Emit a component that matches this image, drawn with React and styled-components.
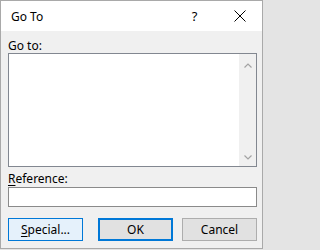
import styled, { createGlobalStyle } from "styled-components";

const GlobalStyle = createGlobalStyle`
  html, body {
    margin: 0;
    padding: 0;
    background: #e4e4e4;
  }
  body {
    font-family: "Noto Sans", "Segoe UI", sans-serif;
    font-size: 12px;
    color: #000;
  }
`;

const Window = styled.div`
  width: 261px;
  height: 247px;
  border: 1px solid #a9a9a9;
  background: #f0f0f0;
  display: flex;
  flex-direction: column;
`;

const TitleBar = styled.div`
  height: 30px;
  background: #fff;
  display: flex;
  align-items: center;
`;

const Title = styled.div`
  flex: 1;
  padding-left: 10px;
  font-size: 12px;
`;

const CaptionButton = styled.div`
  width: 45px;
  height: 30px;
  display: flex;
  align-items: center;
  justify-content: center;
  font-size: 13px;
`;

const Body = styled.div`
  flex: 1;
  padding: 7px 5px 0 7px;
  display: flex;
  flex-direction: column;
`;

const Label = styled.div`
  line-height: 15px;
  margin-top: ${({ $gap }) => $gap || 0}px;
  u {
    text-decoration: underline;
    text-underline-offset: 2px;
  }
`;

const ListBox = styled.div`
  height: 112px;
  margin-top: 0;
  border: 1px solid #828790;
  background: #fff;
  display: flex;
  justify-content: flex-end;
`;

const ScrollBar = styled.div`
  width: 17px;
  background: #f0f0f0;
  display: flex;
  flex-direction: column;
  justify-content: space-between;
  align-items: center;
  padding: 9px 0 6px;
`;

const TextInput = styled.div`
  height: 18px;
  margin-top: 1px;
  border: 1px solid #8a8a8a;
  background: #fff;
`;

const ButtonRow = styled.div`
  margin-top: 11px;
  display: flex;
  justify-content: space-between;
`;

const ButtonGroup = styled.div`
  display: flex;
  gap: 9px;
`;

const Button = styled.div`
  box-sizing: border-box;
  width: 75px;
  height: 23px;
  display: flex;
  align-items: center;
  justify-content: center;
  border: ${({ $variant }) => ($variant === "default" ? 2 : 1)}px solid
    ${({ $variant }) => ($variant ? "#0078d7" : "#adadad")};
  background: ${({ $variant }) => ($variant === "hover" ? "#e5f1fb" : "#e1e1e1")};
  u {
    text-decoration: underline;
    text-underline-offset: 2px;
  }
`;

const Chevron = ({ up }) => (
  <svg width="8" height="5" viewBox="0 0 8 5">
    <path
      d={up ? "M0.5 4.5 L4 1 L7.5 4.5" : "M0.5 0.5 L4 4 L7.5 0.5"}
      fill="none"
      stroke="#a3a3a3"
      strokeWidth="1.2"
    />
  </svg>
);

const CloseIcon = () => (
  <svg width="12" height="12" viewBox="0 0 12 12">
    <path d="M0.5 0.5 L11.5 11.5 M11.5 0.5 L0.5 11.5" stroke="#000" strokeWidth="1" />
  </svg>
);

export default function App() {
  return (
    <>
      <GlobalStyle />
      <Window>
        <TitleBar>
          <Title>Go To</Title>
          <CaptionButton>?</CaptionButton>
          <CaptionButton>
            <CloseIcon />
          </CaptionButton>
        </TitleBar>
        <Body>
          <Label>Go to:</Label>
          <ListBox>
            <ScrollBar>
              <Chevron up />
              <Chevron />
            </ScrollBar>
          </ListBox>
          <Label $gap={4}>
            <u>R</u>eference:
          </Label>
          <TextInput />
          <ButtonRow>
            <Button $variant="hover">
              <u>S</u>pecial...
            </Button>
            <ButtonGroup>
              <Button $variant="default">OK</Button>
              <Button>Cancel</Button>
            </ButtonGroup>
          </ButtonRow>
        </Body>
      </Window>
    </>
  );
}
